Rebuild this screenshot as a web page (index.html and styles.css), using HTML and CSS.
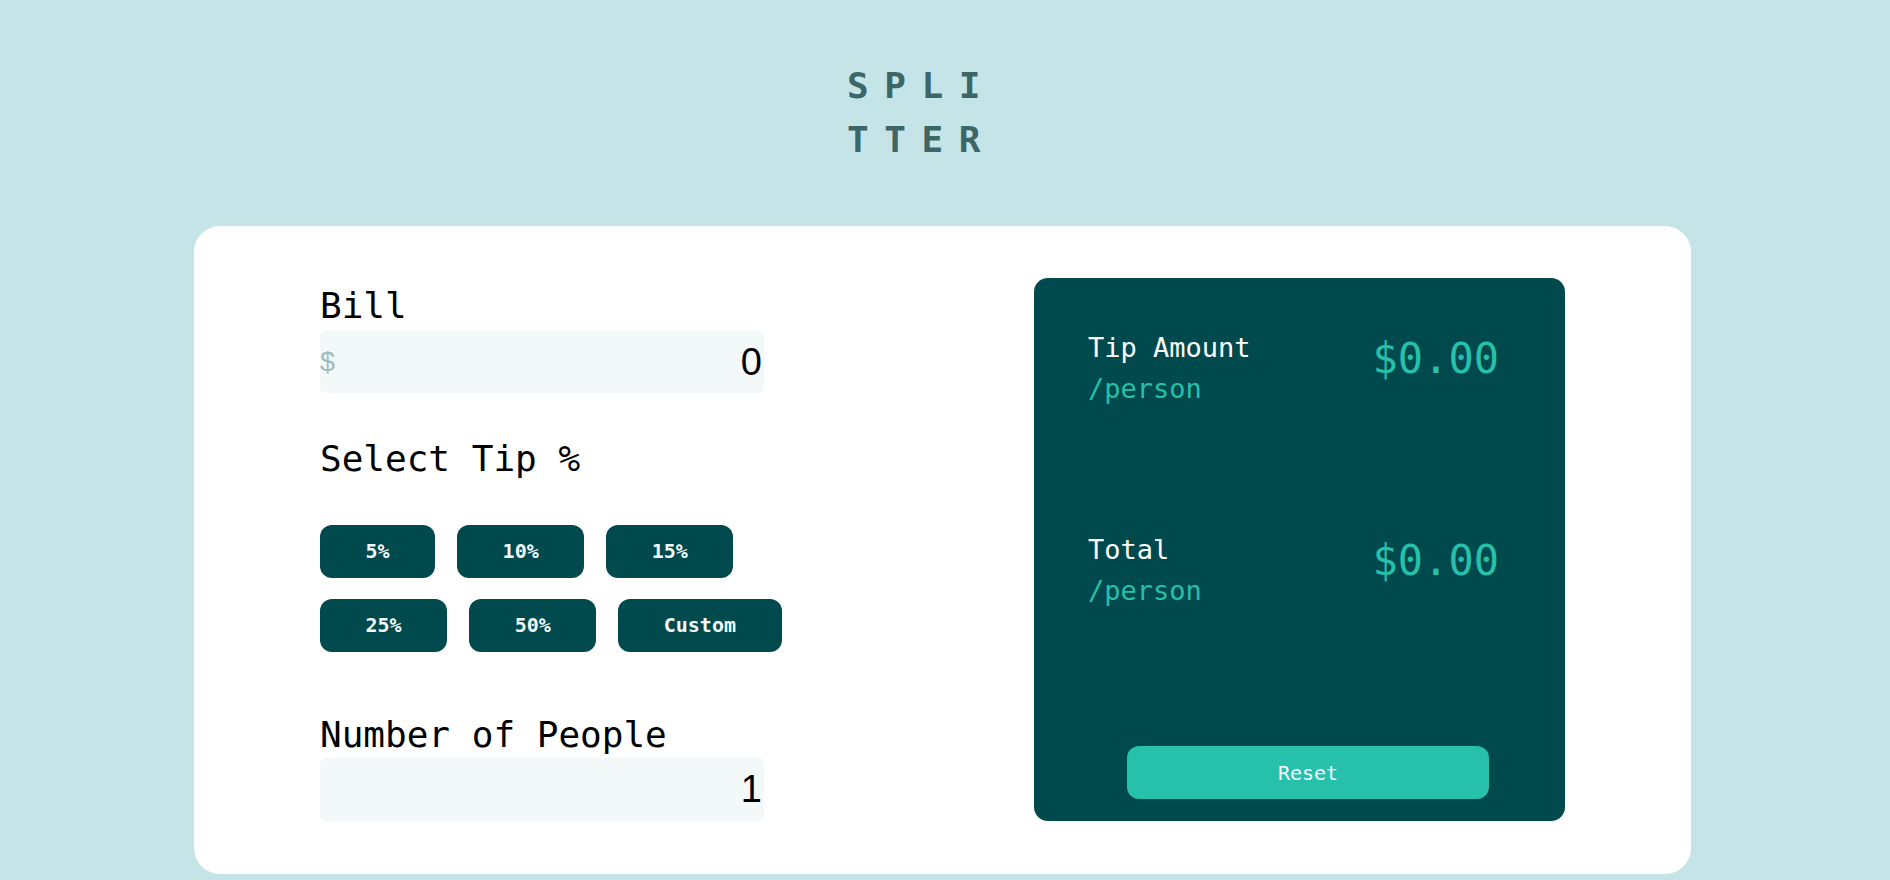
FILE: index.html
```html
<!DOCTYPE html>
<html lang="en">
<head>
<meta charset="utf-8">
<title>Splitter</title>
<link rel="stylesheet" href="styles.css">
</head>
<body>
<div class="page">
  <h1 class="logo">SPLITTER</h1>
  <main class="card">
    <section class="inputs">
      <label class="label label-bill" for="bill">Bill</label>
      <div class="field">
        <span class="field-icon">$</span>
        <input id="bill" class="field-input" type="text" value="0">
      </div>

      <p class="label label-tip">Select Tip %</p>
      <div class="tips">
        <button class="tip">5%</button>
        <button class="tip">10%</button>
        <button class="tip">15%</button>
        <button class="tip">25%</button>
        <button class="tip">50%</button>
        <button class="tip">Custom</button>
      </div>

      <label class="label label-people" for="people">Number of People</label>
      <div class="field field-people">
        <input id="people" class="field-input" type="text" value="1">
      </div>
    </section>

    <section class="result">
      <div class="row">
        <div class="row-text">
          <div class="row-title">Tip Amount</div>
          <div class="row-sub">/person</div>
        </div>
        <div class="row-amount">$0.00</div>
      </div>
      <div class="row row-total">
        <div class="row-text">
          <div class="row-title">Total</div>
          <div class="row-sub">/person</div>
        </div>
        <div class="row-amount">$0.00</div>
      </div>
      <button class="reset">Reset</button>
    </section>
  </main>
</div>
</body>
</html>
```

FILE: styles.css
```css
* {
  box-sizing: border-box;
}

html, body {
  margin: 0;
  padding: 0;
}

body {
  background: #c5e4e7;
  font-family: "DejaVu Sans Mono", "Liberation Mono", monospace;
  color: #000;
}

.page {
  padding-right: 5px;
  padding-top: 59px;
}

.logo {
  width: 191px;
  padding-right: 31px;
  margin: 0 auto;
  font-family: "DejaVu Sans Mono", monospace;
  font-weight: bold;
  font-size: 36px;
  line-height: 54px;
  letter-spacing: 15.6px;
  color: #3d6666;
  word-break: break-all;
}

.card {
  width: 1497px;
  margin: 59px auto 0;
  padding: 52px 126px 53px;
  background: #fff;
  border-radius: 26px;
  display: flex;
  justify-content: space-between;
}

.inputs {
  width: 470px;
  display: flex;
  flex-direction: column;
  align-items: flex-start;
}

.label {
  display: block;
  margin: 0;
  font-size: 36px;
  line-height: 36px;
  font-weight: normal;
}

.label-bill {
  margin-top: 10px;
}

.label-tip {
  margin-top: 48px;
}

.label-people {
  margin-top: 65px;
}

.field {
  width: 444px;
  height: 62px;
  margin-top: 7px;
  background: #f3f8f8;
  border-radius: 6px;
  display: flex;
  align-items: center;
}

.field-people {
  height: 63px;
  margin-top: 5px;
}

.field-icon {
  font-family: "Liberation Sans", Arial, sans-serif;
  font-size: 27px;
  color: #9ebbbd;
}

.field-input {
  flex: 1;
  min-width: 0;
  height: 100%;
  border: 0;
  outline: none;
  background: transparent;
  padding: 0 2px;
  text-align: right;
  font-family: "Liberation Sans", Arial, sans-serif;
  font-size: 38px;
  color: #000;
}

.tips {
  margin-top: 48px;
  width: 470px;
  display: flex;
  flex-wrap: wrap;
  gap: 21px 22px;
}

.tip {
  height: 53px;
  padding: 0 45.5px;
  border: 0;
  border-radius: 12px;
  background: #00494d;
  color: #f3f9fa;
  font-family: "DejaVu Sans Mono", monospace;
  font-weight: bold;
  font-size: 20px;
  line-height: 53px;
}

.result {
  width: 531px;
  background: #00494d;
  border-radius: 14px;
  padding: 49px 66px 22px 54px;
  display: flex;
  flex-direction: column;
}

.row {
  display: flex;
  justify-content: space-between;
  align-items: flex-start;
}

.row-total {
  margin-top: 120px;
}

.row-title {
  font-size: 27px;
  line-height: 41px;
  color: #fff;
}

.row-sub {
  font-size: 27px;
  line-height: 41px;
  color: #26c0ab;
}

.row-amount {
  margin-top: 11px;
  font-size: 42px;
  line-height: 42px;
  color: #26c0ab;
}

.reset {
  margin-top: auto;
  margin-left: 39px;
  width: 362px;
  height: 53px;
  border: 0;
  border-radius: 12px;
  background: #26c0ab;
  color: #f3f9fa;
  font-family: "DejaVu Sans Mono", monospace;
  font-size: 20px;
}
```
